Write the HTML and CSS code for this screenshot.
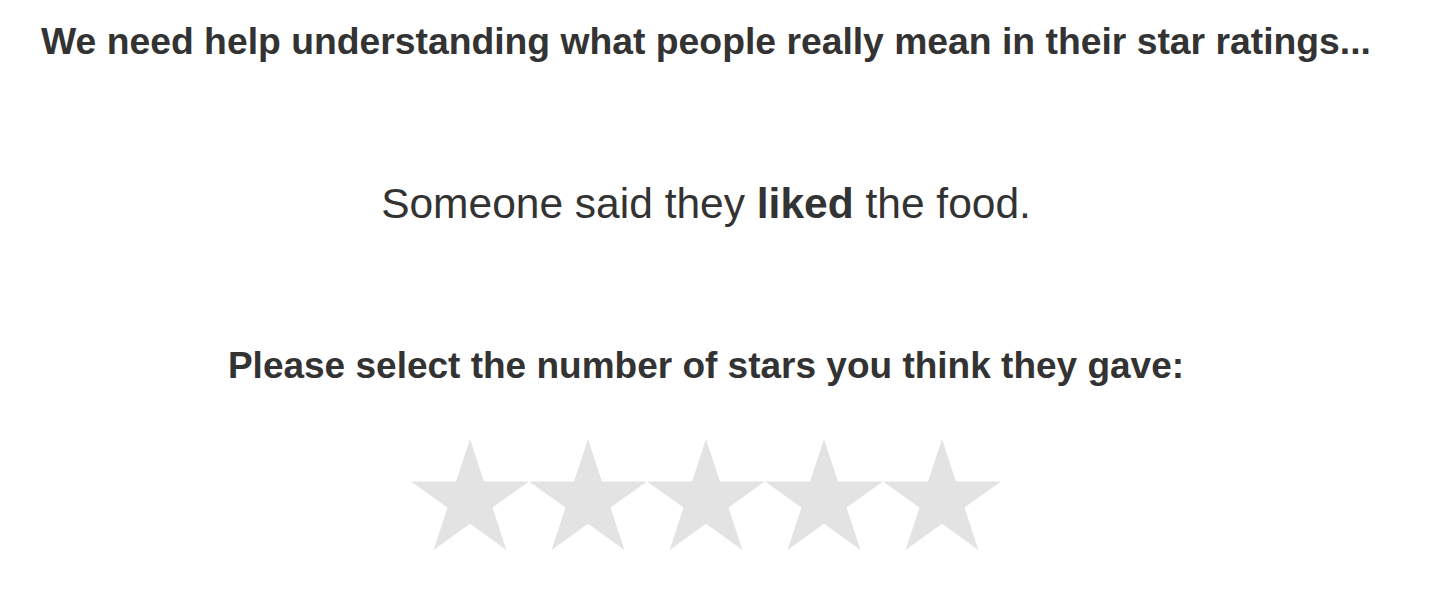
FILE: index.html
```html
<!DOCTYPE html>
<html lang="en">
<head>
<meta charset="utf-8">
<title>Star ratings</title>
<link rel="stylesheet" href="styles.css">
</head>
<body>
<main class="survey">
  <h1 class="intro">We need help understanding what people really mean in their star ratings...</h1>
  <p class="statement">Someone said they <strong>liked</strong> the food.</p>
  <h2 class="prompt">Please select the number of stars you think they gave:</h2>
  <div class="stars" role="radiogroup" aria-label="Star rating">
    <svg class="star" viewBox="0 0 117 111.3" preserveAspectRatio="none" aria-label="1 star"><polygon points="58.5,0 72.31,42.5 117,42.5 80.84,68.76 94.65,111.25 58.5,84.99 22.35,111.25 36.16,68.76 0,42.5 44.69,42.5"/></svg>
    <svg class="star" viewBox="0 0 117 111.3" preserveAspectRatio="none" aria-label="2 stars"><polygon points="58.5,0 72.31,42.5 117,42.5 80.84,68.76 94.65,111.25 58.5,84.99 22.35,111.25 36.16,68.76 0,42.5 44.69,42.5"/></svg>
    <svg class="star" viewBox="0 0 117 111.3" preserveAspectRatio="none" aria-label="3 stars"><polygon points="58.5,0 72.31,42.5 117,42.5 80.84,68.76 94.65,111.25 58.5,84.99 22.35,111.25 36.16,68.76 0,42.5 44.69,42.5"/></svg>
    <svg class="star" viewBox="0 0 117 111.3" preserveAspectRatio="none" aria-label="4 stars"><polygon points="58.5,0 72.31,42.5 117,42.5 80.84,68.76 94.65,111.25 58.5,84.99 22.35,111.25 36.16,68.76 0,42.5 44.69,42.5"/></svg>
    <svg class="star" viewBox="0 0 117 111.3" preserveAspectRatio="none" aria-label="5 stars"><polygon points="58.5,0 72.31,42.5 117,42.5 80.84,68.76 94.65,111.25 58.5,84.99 22.35,111.25 36.16,68.76 0,42.5 44.69,42.5"/></svg>
  </div>
</main>
</body>
</html>
```
FILE: styles.css
```css
html, body {
  margin: 0;
  padding: 0;
  background: #ffffff;
}

body {
  font-family: "Liberation Sans", Arial, Helvetica, sans-serif;
  color: #333333;
}

.survey {
  width: 1412px;
  display: flex;
  flex-direction: column;
  align-items: center;
  padding-top: 19px;
}

.intro {
  margin: 0;
  font-size: 37.3px;
  font-weight: bold;
  line-height: 44px;
  white-space: nowrap;
}

.statement {
  margin: 0;
  margin-top: 116px;
  font-size: 42.5px;
  line-height: 50px;
  white-space: nowrap;
}

.statement strong {
  font-weight: bold;
}

.prompt {
  margin: 0;
  margin-top: 115px;
  font-size: 37px;
  font-weight: bold;
  line-height: 44px;
  white-space: nowrap;
}

.stars {
  display: flex;
  margin-top: 51px;
}

.star {
  width: 118px;
  height: 111px;
  display: block;
}

.star polygon {
  fill: #e3e3e3;
}
```
